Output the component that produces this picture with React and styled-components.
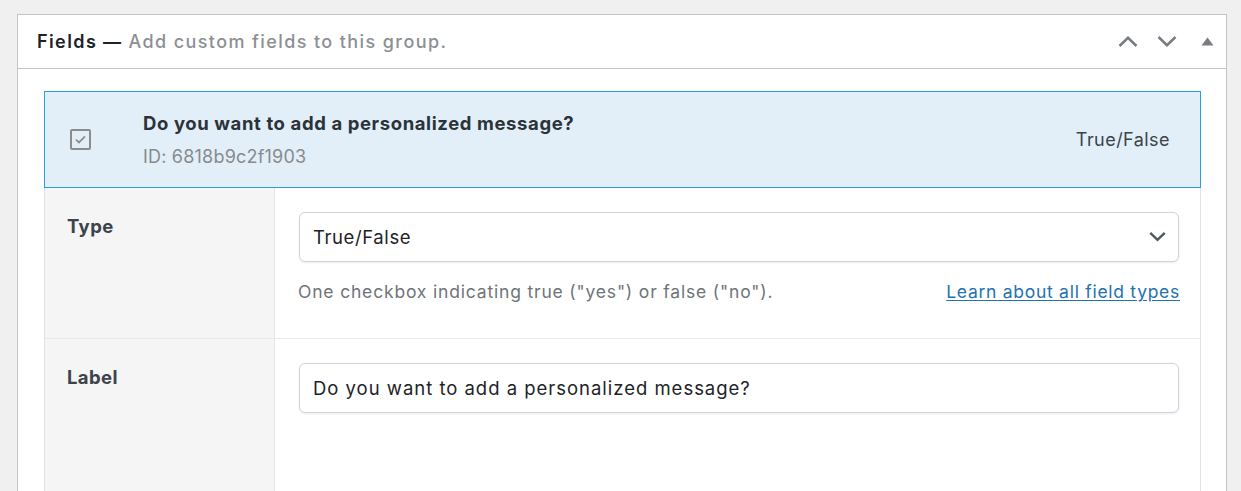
import React from 'react';
import styled, {createGlobalStyle} from 'styled-components';

const GlobalStyle = createGlobalStyle`
  html, body {
    margin: 0;
    padding: 0;
    background: #f0f0f1;
    font-family: Inter, "Open Sans", "Liberation Sans", sans-serif;
    overflow: hidden;
  }
`;

const Page = styled.div`
  padding: 14px 14px 0 17px;
`;

const Postbox = styled.div`
  background: #fff;
  border: 1px solid #c3c4c7;
  border-bottom: none;
`;

const Header = styled.div`
  display: flex;
  align-items: center;
  height: 53px;
  padding: 0 12px 0 19px;
  border-bottom: 1px solid #c3c4c7;
`;

const Title = styled.h2`
  flex: 1;
  margin: 0;
  font-size: 18px;
  font-weight: 600;
  color: #1d2327;
  letter-spacing: 1.4px;
`;

const TitleNote = styled.span`
  color: #8c8f94;
  font-weight: 500;
`;

const HeaderActions = styled.div`
  display: flex;
  align-items: center;
  gap: 19px;
  color: #787c82;
`;

const Triangle = styled.svg`
  margin-left: 5px;
`;

const Inside = styled.div`
  padding: 22px 25px 0 26px;
`;

const Handle = styled.div`
  display: flex;
  align-items: center;
  height: 95px;
  padding: 0 30px 0 25px;
  background: #e2eff8;
  border: 1px solid #2b9fd9;
`;

const TypeIcon = styled.div`
  width: 21px;
  display: flex;
  margin-right: 52px;
  color: #8c8c8c;
`;

const HandleMain = styled.div`
  flex: 1;
  display: flex;
  flex-direction: column;
  gap: 12px;
`;

const FieldTitle = styled.div`
  font-size: 18.5px;
  font-weight: 700;
  letter-spacing: 0.6px;
  color: #2c3338;
  margin-top: -1px;
`;

const FieldId = styled.div`
  font-size: 18px;
  letter-spacing: 0.2px;
  color: #888a8d;
`;

const FieldType = styled.div`
  font-size: 18px;
  letter-spacing: 0.45px;
  color: #3c434a;
`;

const Settings = styled.div`
  border-left: 1px solid #e1e1e1;
  border-right: 1px solid #e1e1e1;
`;

const Row = styled.div`
  display: flex;
  min-height: ${p => p.$minHeight}px;
  border-top: ${p => (p.$first ? 'none' : '1px solid #e8e8e8')};
`;

const LabelCol = styled.div`
  width: 230px;
  flex: none;
  box-sizing: border-box;
  padding: 26px 0 0 22px;
  background: #f5f5f5;
  border-right: 1px solid #e4e4e4;
  font-size: 18.5px;
  font-weight: 700;
  letter-spacing: 0.4px;
  color: #3c434a;
  line-height: 24px;
`;

const InputCol = styled.div`
  flex: 1;
  padding: 24px 21px 0 24px;
`;

const SelectBox = styled.div`
  height: 50px;
  box-sizing: border-box;
  display: flex;
  align-items: center;
  justify-content: space-between;
  padding: 0 12px 0 13px;
  border: 1px solid #d0d3dc;
  border-radius: 6px;
  box-shadow: 0 1px 2px rgba(16, 24, 40, 0.08);
  font-size: 18.5px;
  letter-spacing: 0.6px;
  color: #1d2327;
  background: #fff;
`;

const TextInput = styled(SelectBox)`
  letter-spacing: 0.98px;
`;

const Description = styled.div`
  display: flex;
  justify-content: space-between;
  margin: 18px -1px 0 -1px;
  font-size: 17.5px;
  letter-spacing: 0.82px;
  line-height: 24px;
  color: #6f7479;
`;

const Link = styled.a`
  color: #2271b1;
  letter-spacing: 0.72px;
  text-decoration: underline;
  text-underline-offset: 2px;
`;

const Chevron = ({up, size = 20, color = 'currentColor', width = 2.5}) => (
  <svg width={size} height={size / 2 + 1} viewBox="0 0 20 11" fill="none">
    <path
      d={up ? 'M1.5 10 L10 1.8 L18.5 10' : 'M1.5 1 L10 9.2 L18.5 1'}
      stroke={color}
      strokeWidth={width}
    />
  </svg>
);

const CheckIcon = () => (
  <svg width="21" height="21" viewBox="0 0 21 21" fill="none">
    <rect x="1" y="1" width="19" height="19" rx="1" stroke="currentColor" strokeWidth="2" />
    <path d="M6 10.6 L9 13.4 L15 7.4" stroke="currentColor" strokeWidth="1.8" />
  </svg>
);

const App = () => (
  <Page>
    <GlobalStyle />
    <Postbox>
      <Header>
        <Title>
          Fields — <TitleNote>Add custom fields to this group.</TitleNote>
        </Title>
        <HeaderActions>
          <Chevron up />
          <Chevron />
          <Triangle width="13" height="9" viewBox="0 0 13 9">
            <path d="M6.5 0.5 L12.5 8.5 L0.5 8.5 Z" fill="currentColor" />
          </Triangle>
        </HeaderActions>
      </Header>
      <Inside>
        <Handle>
          <TypeIcon>
            <CheckIcon />
          </TypeIcon>
          <HandleMain>
            <FieldTitle>Do you want to add a personalized message?</FieldTitle>
            <FieldId>ID: 6818b9c2f1903</FieldId>
          </HandleMain>
          <FieldType>True/False</FieldType>
        </Handle>
        <Settings>
          <Row $first $minHeight={150}>
            <LabelCol>Type</LabelCol>
            <InputCol>
              <SelectBox>
                True/False
                <Chevron size={17} color="#50575e" width={2.8} />
              </SelectBox>
              <Description>
                <span>One checkbox indicating true ("yes") or false ("no").</span>
                <Link href="#">Learn about all field types</Link>
              </Description>
            </InputCol>
          </Row>
          <Row $minHeight={200}>
            <LabelCol>Label</LabelCol>
            <InputCol>
              <TextInput>Do you want to add a personalized message?</TextInput>
            </InputCol>
          </Row>
        </Settings>
      </Inside>
    </Postbox>
  </Page>
);

export default App;
